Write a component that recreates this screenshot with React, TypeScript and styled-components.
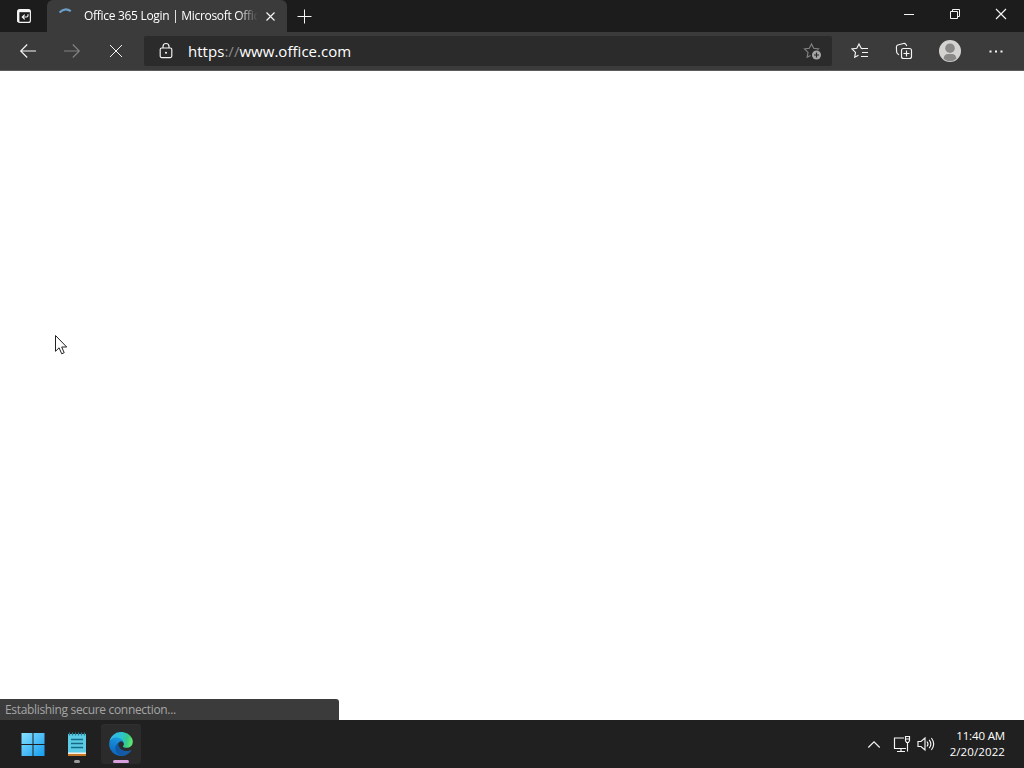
import React from "react";
import styled, { createGlobalStyle, css } from "styled-components";

const GlobalStyle = createGlobalStyle`
  * {
    box-sizing: border-box;
  }
  body {
    margin: 0;
    overflow: hidden;
    font-family: "Open Sans", "Noto Sans", sans-serif;
  }
`;

const Desktop = styled.div`
  position: relative;
  display: flex;
  flex-direction: column;
  width: 1024px;
  height: 768px;
  background: #fff;
`;

const TitleBar = styled.header`
  display: flex;
  height: 32px;
  background: #1c1c1c;
  color: #fff;
`;

const TabActions = styled.div`
  display: flex;
  justify-content: center;
  align-items: center;
  width: 47px;
  padding-left: 1px;
`;

const Tab = styled.div`
  display: flex;
  align-items: center;
  width: 240px;
  padding: 0 12px 0 11px;
  background: #3b3b3b;
  border-radius: 6px 6px 0 0;
`;

const TabTitle = styled.span`
  flex: none;
  width: 173px;
  margin: 0 9px 0 10px;
  overflow: hidden;
  font-size: 12px;
  letter-spacing: -0.3px;
  line-height: 32px;
  white-space: nowrap;
  mask-image: linear-gradient(to right, #000 154px, transparent 174px);
`;

const NewTab = styled.div`
  display: flex;
  align-items: center;
  padding-left: 10px;
`;

const WindowControls = styled.div`
  display: flex;
  margin-left: auto;
`;

const WindowButton = styled.div`
  display: flex;
  justify-content: center;
  align-items: center;
  width: 46px;
  height: 28px;
`;

const Toolbar = styled.div`
  display: flex;
  align-items: center;
  height: 39px;
  padding: 0 6px;
  background: #3b3b3b;
  border-bottom: 1px solid #5c5c5c;
`;

const ToolButton = styled.div<{ $width?: number }>`
  display: flex;
  flex: none;
  justify-content: center;
  align-items: center;
  width: ${(props) => props.$width || 44}px;
  height: 38px;
`;

const AddressBar = styled.div`
  display: flex;
  flex: none;
  align-items: center;
  width: 688px;
  height: 30px;
  margin: 0 6px;
  padding: 0 11px 0 12px;
  background: #2b2b2b;
  border-radius: 2px;
  color: #fff;
`;

const Url = styled.span`
  margin: 0 auto 0 12px;
  font-size: 15px;
  letter-spacing: 0.03px;
  line-height: 30px;
  white-space: nowrap;
`;

const Dim = styled.span`
  color: #8c8c8c;
`;

const Page = styled.main`
  display: flex;
  flex: 1;
  align-items: flex-end;
  background: #fff;
`;

const StatusBar = styled.div`
  width: 339px;
  height: 21px;
  padding-left: 5px;
  background: #3b3b3b;
  border-radius: 0 3px 0 0;
  color: #a6a6a6;
  font-size: 12px;
  letter-spacing: -0.33px;
  line-height: 21px;
`;

const Taskbar = styled.footer`
  display: flex;
  align-items: center;
  height: 48px;
  padding: 0 19px 0 13px;
  background: #202020;
  color: #fff;
`;

const TaskButton = styled.div<{ $active?: boolean }>`
  display: flex;
  flex-direction: column;
  align-items: center;
  width: 40px;
  height: 40px;
  margin-right: 4px;
  padding-top: 8px;
  border-radius: 4px;
  ${(props) =>
    props.$active &&
    css`
      background: #2b2b2b;
      box-shadow: inset 0 1px #303030;
    `}
`;

const Indicator = styled.div<{ $active?: boolean }>`
  width: ${(props) => (props.$active ? 16 : 6)}px;
  height: 3px;
  margin-top: 4px;
  background: ${(props) => (props.$active ? "#d9a0e0" : "#9a9a9a")};
  border-radius: 2px;
`;

const Tray = styled.div`
  display: flex;
  align-items: center;
  margin-left: auto;
`;

const Clock = styled.div`
  width: 70px;
  font-size: 11.5px;
  line-height: 16px;
  text-align: right;
  white-space: nowrap;
`;

const ClockLine = styled.div<{ $spacing: number }>`
  letter-spacing: ${(props) => props.$spacing}px;
`;

const Pointer = styled.svg`
  position: absolute;
  top: 335px;
  left: 55px;
`;

const Icon = styled.svg<{ $dim?: boolean; $gap?: number }>`
  display: block;
  flex: none;
  margin-left: ${(props) => props.$gap || 0}px;
  overflow: visible;
  fill: none;
  stroke: ${(props) => (props.$dim ? "#828282" : "#f5f5f5")};
  stroke-width: 1.15;
`;

const Spinner = styled.svg`
  display: block;
  flex: none;
  fill: none;
  stroke: #6b9fc8;
  stroke-width: 2.2;
`;

const Avatar = styled.svg`
  display: block;
  fill: #8b8988;
`;

export default function App() {
  return (
    <Desktop>
      <GlobalStyle />
      <TitleBar>
        <TabActions>
          <Icon width="14" height="14" viewBox="0 0 14 14">
            <rect x=".6" y=".6" width="12.8" height="12.8" rx="2" />
            <path d="M1 2h12" strokeWidth="2.4" />
            <path d="M1.500 3v10" strokeWidth="1.8" />
            <path d="M11 5.300v1.200q0 1.500-1.500 1.500H5.500M7.700 5.600L5.300 8l2.400 2.400" />
          </Icon>
        </TabActions>
        <Tab>
          <Spinner width="16" height="16" viewBox="0 0 16 16">
            <path d="M1.500 4.500Q7-1.200 12.800 3.200" />
          </Spinner>
          <TabTitle>Office 365 Login | Microsoft Office</TabTitle>
          <Icon width="9" height="9" viewBox="0 0 9 9">
            <path d="M.5.5l8 8M8.5.5l-8 8" />
          </Icon>
        </Tab>
        <NewTab>
          <Icon width="15" height="15" viewBox="0 0 15 15">
            <path d="M7.5.5v14M.5 7.5h14" strokeWidth="1" />
          </Icon>
        </NewTab>
        <WindowControls>
          <WindowButton>
            <Icon width="10" height="10" viewBox="0 0 10 10">
              <path d="M0 5.5h10" strokeWidth="1" />
            </Icon>
          </WindowButton>
          <WindowButton>
            <Icon width="10" height="10" viewBox="0 0 10 10">
              <path d="M.5 2.5h7v7h-7zM2.5 2.5v-2h7v7h-2" strokeWidth="1" />
            </Icon>
          </WindowButton>
          <WindowButton>
            <Icon width="10" height="10" viewBox="0 0 10 10">
              <path d="M0 0l10 10M10 0L0 10" />
            </Icon>
          </WindowButton>
        </WindowControls>
      </TitleBar>

      <Toolbar>
        <ToolButton>
          <Icon width="16" height="14" viewBox="0 0 16 14">
            <path d="M16 7H.8M7.2.5L.7 7l6.5 6.5" />
          </Icon>
        </ToolButton>
        <ToolButton>
          <Icon $dim width="16" height="14" viewBox="0 0 16 14">
            <path d="M0 7h15.2M8.8.5L15.3 7l-6.500 6.500" />
          </Icon>
        </ToolButton>
        <ToolButton>
          <Icon width="12" height="12" viewBox="0 0 12 12">
            <path d="M0 0l12 12M12 0L0 12" strokeWidth="1" />
          </Icon>
        </ToolButton>
        <AddressBar>
          <ToolButton $width={20}>
            <Icon width="14" height="16" viewBox="0 0 14 16">
              <rect x="1.2" y="5" width="11.6" height="9.6" rx="1.5" />
              <path d="M4 5V3.500a3 3 0 0 1 6 0V5" />
              <circle cx="7" cy="9.8" r="1" fill="#fff" stroke="none" />
            </Icon>
          </ToolButton>
          <Url>
            https<Dim>://</Dim>www.office.com
          </Url>
          <Icon $dim width="18" height="16" viewBox="0 0 18 16">
            <path d="M14.500 6.800l1-.9-4.800-.6L8.500 1 6.300 5.300l-4.800.7L5 9.400l-.8 4.900 3.300-1.700" />
            <circle cx="13.5" cy="12" r="4.5" fill="#a6a6a6" stroke="none" />
            <path d="M13.500 9.500v5M11 12h5" style={{ stroke: "#2b2b2b" }} />
          </Icon>
        </AddressBar>
        <ToolButton $width={43}>
          <Icon width="17" height="16" viewBox="0 0 17 16">
            <path d="M12 5.600L10.200 5.300 8 1 5.800 5.300 1 6l3.500 3.400-.8 4.900 3.800-2" />
            <path d="M10 5.500h7M11 9.500h6M10 13.500h7" />
          </Icon>
        </ToolButton>
        <ToolButton $width={45}>
          <Icon width="16" height="16" viewBox="0 0 16 16">
            <path d="M3 11.800L1.800 10.900Q.8 10 .6 8.800L.4 4Q.4 2.500 1.800 2L7.500.5Q9 .2 10 1.500l.8 1.600" />
            <rect x="5.5" y="5.500" width="10" height="10" rx="2" />
            <path d="M10.500 7.500v6M7.500 10.500h6" />
          </Icon>
        </ToolButton>
        <ToolButton $width={48}>
          <Avatar width="22" height="22" viewBox="0 0 22 22">
            <circle cx="11" cy="11" r="11" fill="#d5d3d0" />
            <circle cx="11" cy="8.200" r="4.800" />
            <path d="M4.600 18.800Q5 14 9 14h4q4 0 4.400 4.800Q11 23.800 4.600 18.800z" />
          </Avatar>
        </ToolButton>
        <ToolButton>
          <Icon width="14" height="3" viewBox="0 0 14 3">
            <path d="M.5 1.500h2M6 1.500h2M11.500 1.500h2" strokeWidth="2" />
          </Icon>
        </ToolButton>
      </Toolbar>

      <Page>
        <StatusBar>Establishing secure connection...</StatusBar>
      </Page>

      <Taskbar>
        <TaskButton>
          <svg width="24" height="24" viewBox="0 0 24 24">
            <defs>
              <linearGradient id="start" x1="0" y1="0" x2="24" y2="24" gradientUnits="userSpaceOnUse">
                <stop stopColor="#8be3ff" />
                <stop offset="1" stopColor="#139cf0" />
              </linearGradient>
            </defs>
            <path d="M.5 1h11v11H.5zM12.500 1h11v11h-11zM.5 13h11v11H.5zM12.500 13h11v11h-11z" fill="url(#start)" />
          </svg>
        </TaskButton>
        <TaskButton>
          <svg width="24" height="24" viewBox="0 0 24 24">
            <path d="M3 2h18v19H3z" fill="#5ccbe5" />
            <path d="M3 21h18v3H3z" fill="#c87825" />
            <path d="M3 20.500h18V22H3z" fill="#f4eee4" />
            <path d="M6 7.500h12M6 11.500h12M6 15.500h12" stroke="#156b85" strokeWidth="1.7" />
            <path d="M4.500.5v3M7.500.5v3M10.500.5v3M13.500.5v3M16.500.5v3M19.500.5v3" stroke="#267b96" strokeWidth="1.2" />
          </svg>
          <Indicator />
        </TaskButton>
        <TaskButton $active>
          <svg width="24" height="24" viewBox="0 0 256 260">
            <defs>
              <linearGradient id="edgeBottom" x1="60" y1="180" x2="240" y2="180" gradientUnits="userSpaceOnUse">
                <stop stopColor="#0c59a4" />
                <stop offset="1" stopColor="#1a5ca8" />
              </linearGradient>
              <linearGradient id="edgeLeft" x1="120" y1="60" x2="50" y2="245" gradientUnits="userSpaceOnUse">
                <stop stopColor="#1b9de2" />
                <stop offset=".5" stopColor="#1480d0" />
                <stop offset="1" stopColor="#0c65bd" />
              </linearGradient>
              <linearGradient id="edgeTop" x1="10" y1="70" x2="250" y2="120" gradientUnits="userSpaceOnUse">
                <stop stopColor="#35b5ee" />
                <stop offset=".45" stopColor="#2bc3d2" />
                <stop offset=".75" stopColor="#36c98a" />
                <stop offset="1" stopColor="#66eb6e" />
              </linearGradient>
            </defs>
            <path
              d="M235.700 195.500a94 94 0 0 1-10.600 4.700 102 102 0 0 1-35.900 6.400c-47.300 0-88.500-32.500-88.500-74.300a31.500 31.500 0 0 1 16.400-27.300c-42.800 1.800-53.800 46.400-53.800 72.500 0 73.900 68.100 81.400 82.800 81.400 7.900 0 19.800-2.300 27-4.600l1.300-.4a128 128 0 0 0 66.600-52.800 4 4 0 0 0-5.300-5.600z"
              fill="url(#edgeBottom)"
            />
            <path
              d="M105.700 246.400A79 79 0 0 1 83 225a80.700 80.700 0 0 1 29.500-120.600c3.100-1.500 8.500-4.100 15.600-4a32.300 32.300 0 0 1 25.600 13 32 32 0 0 1 6.300 18.600c0-.2 24.500-79.600-80-79.600-43.900 0-80 41.700-80 78.200a130 130 0 0 0 12.100 56 128 128 0 0 0 156.400 67.100 75.500 75.500 0 0 1-62.800-7.300z"
              fill="url(#edgeLeft)"
            />
            <path
              d="M152.300 148.900c-.8 1-3.300 2.500-3.300 5.600 0 2.600 1.700 5.100 4.700 7.200 14.400 10 41.500 8.700 41.600 8.700a59.600 59.600 0 0 0 30.300-8.300A61.400 61.400 0 0 0 256 109.200c.3-22.400-8-37.300-11.300-43.900C223.500 23.800 177.700 0 128 0A128 128 0 0 0 0 126.200c.5-36.500 36.800-66 80-66 3.500 0 23.500.3 42 10 16.300 8.600 24.900 19 30.900 29.200 6.100 10.700 7.200 24.200 7.200 29.600s-2.700 13.300-7.800 19.900z"
              fill="url(#edgeTop)"
            />
          </svg>
          <Indicator $active />
        </TaskButton>
        <Tray>
          <Icon width="12" height="7" viewBox="0 0 12 7">
            <path d="M.3 6.500L6 .8l5.700 5.700" />
          </Icon>
          <Icon $gap={13} width="18" height="18" viewBox="0 0 18 18">
            <path d="M11 3H1.500v10.500H13M8 14v2M4 16.500h8M14.500 7.500v9M12.500 1.500h4v4l-1 2h-2l-1-2zM13 4h3" />
          </Icon>
          <Icon $gap={6} width="18" height="16" viewBox="0 0 18 16">
            <path d="M1 5.500h3L8 2v12l-4-3.500H1zM10 5.500q2 2.500 0 5M12.200 3.800q3.300 4.200 0 8.400M14.400 2q4.600 6 0 12" />
          </Icon>
          <Clock>
            <ClockLine $spacing={-0.15}>11:40 AM</ClockLine>
            <ClockLine $spacing={0.1}>2/20/2022</ClockLine>
          </Clock>
        </Tray>
      </Taskbar>

      <Pointer width="13" height="20" viewBox="0 0 13 20">
        <path d="M.5.5v15.800l3.600-3.500 2.600 6 2.500-1.100-2.500-5.700h5z" fill="#fff" stroke="#222" />
      </Pointer>
    </Desktop>
  );
}
